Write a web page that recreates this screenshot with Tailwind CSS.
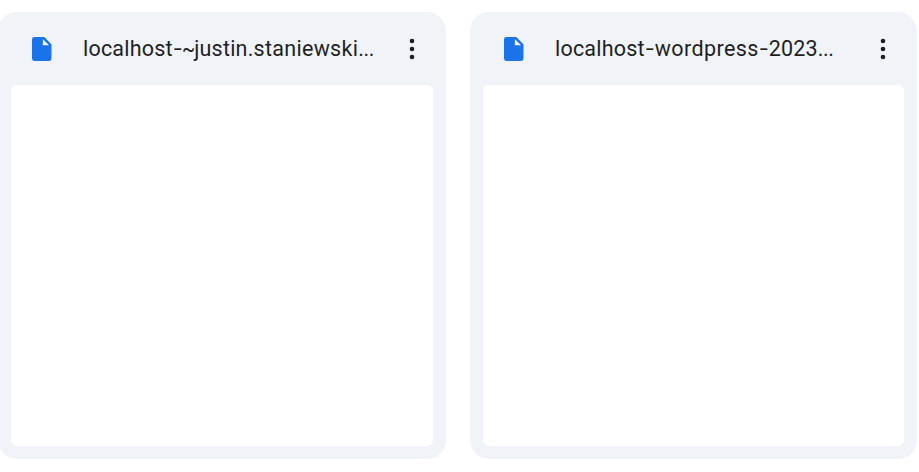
<!DOCTYPE html>
<html lang="en">
<head>
<meta charset="utf-8">
<title>Files</title>
<script src="https://cdn.jsdelivr.net/npm/@tailwindcss/browser@4"></script>
</head>
<body class="bg-white overflow-hidden">
<main class="flex gap-6 pt-3 -ml-0.5 w-[919px] h-[459px] font-['Roboto','Liberation_Sans',sans-serif] text-[#1f1f1f]">
  <article class="flex flex-col w-[448px] shrink-0 rounded-[19px] bg-[#f0f4f9] px-[13px] pb-[13px]">
    <header class="flex items-center h-[73px] shrink-0 pl-[21px]">
      <svg class="w-5 h-6 shrink-0" viewBox="0 0 20 24" fill="#1a73e8"><path d="M2.4 0H12.3L19.5 7.4V21.6Q19.5 24 17.1 24H2.4Q0 24 0 21.6V2.4Q0 0 2.4 0Z"/><path fill="#fff" d="M10.9 2.2V8.2H17Z"/></svg>
      <h2 class="ml-[31px] w-[319px] shrink-0 whitespace-nowrap text-[21.5px] leading-7 tracking-[0.2px]">localhost<span class="inline-block w-[10px] text-center scale-x-135">-</span><span class="inline-block w-[12.5px] -ml-px origin-left scale-x-90">~</span>justin.<span class="tracking-[0.3px]">staniewski</span><span class="tracking-[-0.4px]">...</span></h2>
      <button class="w-5 h-6 shrink-0" aria-label="More actions"><svg class="w-5 h-6" viewBox="0 0 20 24" fill="#1f1f1f"><circle cx="10" cy="4" r="2.3"/><circle cx="10" cy="12" r="2.3"/><circle cx="10" cy="20" r="2.3"/></svg></button>
    </header>
    <div class="grow rounded-md bg-white"></div>
  </article>
  <article class="flex flex-col w-[447px] shrink-0 rounded-[19px] bg-[#f0f4f9] px-[13px] pb-[13px]">
    <header class="flex items-center h-[73px] shrink-0 pl-[21px]">
      <svg class="w-5 h-6 shrink-0" viewBox="0 0 20 24" fill="#1a73e8"><path d="M2.4 0H12.3L19.5 7.4V21.6Q19.5 24 17.1 24H2.4Q0 24 0 21.6V2.4Q0 0 2.4 0Z"/><path fill="#fff" d="M10.9 2.2V8.2H17Z"/></svg>
      <h2 class="ml-[31px] w-[318px] shrink-0 whitespace-nowrap text-[21.5px] leading-7 tracking-[0.2px]">localhost<span class="inline-block w-[10px] text-center scale-x-135">-</span><span class="tracking-[0.4px]">wordpress</span><span class="inline-block w-[10px] text-center scale-x-135">-</span>2023<span class="tracking-[-0.4px]">...</span></h2>
      <button class="w-5 h-6 shrink-0" aria-label="More actions"><svg class="w-5 h-6" viewBox="0 0 20 24" fill="#1f1f1f"><circle cx="10" cy="4" r="2.3"/><circle cx="10" cy="12" r="2.3"/><circle cx="10" cy="20" r="2.3"/></svg></button>
    </header>
    <div class="grow rounded-md bg-white"></div>
  </article>
</main>
</body>
</html>
